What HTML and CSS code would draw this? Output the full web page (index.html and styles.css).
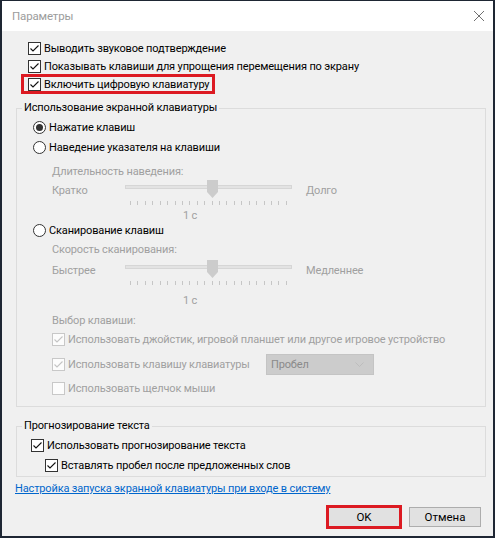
FILE: index.html
```html
<!DOCTYPE html>
<html lang="ru">
<head>
<meta charset="utf-8">
<title>Параметры</title>
<link rel="stylesheet" href="styles.css">
</head>
<body>
<div class="window">
  <div class="titlebar">
    <span class="title">Параметры</span>
    <svg class="close" width="12" height="12" viewBox="0 0 12 12"><path d="M1 1L11 11M11 1L1 11" stroke="#707070" stroke-width="1" fill="none"/></svg>
  </div>
  <div class="content">
    <div class="top-options">
      <div class="row"><span class="cb"><svg viewBox="0 0 13 13"><path d="M2.5 6.5L5 9L10.5 3.5" fill="none" stroke="#111" stroke-width="1.1"/></svg></span><span>Выводить звуковое подтверждение</span></div>
      <div class="row"><span class="cb"><svg viewBox="0 0 13 13"><path d="M2.5 6.5L5 9L10.5 3.5" fill="none" stroke="#111" stroke-width="1.1"/></svg></span><span>Показывать клавиши для упрощения перемещения по экрану</span></div>
      <div class="row"><span class="highlight"><span class="cb"><svg viewBox="0 0 13 13"><path d="M2.5 6.5L5 9L10.5 3.5" fill="none" stroke="#111" stroke-width="1.1"/></svg></span><span>Включить цифровую клавиатуру</span></span></div>
    </div>

    <fieldset class="group group-osk">
      <legend>Использование экранной клавиатуры</legend>
      <div class="group-body">
        <div class="radio-row r1"><span class="radio checked"></span><span>Нажатие клавиш</span></div>
        <div class="radio-row"><span class="radio"></span><span>Наведение указателя на клавиши</span></div>
        <div class="sub-label sl1">Длительность наведения:</div>
        <div class="slider-row">
          <span class="slider-label">Кратко</span>
          <div class="slider">
            <div class="track-area"><div class="track"></div><svg class="thumb" width="11" height="18" viewBox="0 0 11 18"><path d="M0 0H11V12L5.5 18L0 12Z" fill="#cccccc"/></svg></div>
            <div class="ticks"><i></i><i></i><i></i><i></i><i></i><i></i><i></i><i></i><i></i><i></i><i></i><i></i><i></i><i></i><i></i><i></i><i></i><i></i><i></i><i></i><i></i><i></i></div>
          </div>
          <span class="slider-end">Долго</span>
        </div>
        <div class="value v1">1 с</div>
        <div class="radio-row r3"><span class="radio"></span><span>Сканирование клавиш</span></div>
        <div class="sub-label sl2">Скорость сканирования:</div>
        <div class="slider-row s2">
          <span class="slider-label">Быстрее</span>
          <div class="slider">
            <div class="track-area"><div class="track"></div><svg class="thumb" width="11" height="18" viewBox="0 0 11 18"><path d="M0 0H11V12L5.5 18L0 12Z" fill="#cccccc"/></svg></div>
            <div class="ticks"><i></i><i></i><i></i><i></i><i></i><i></i><i></i><i></i><i></i><i></i><i></i><i></i><i></i><i></i><i></i><i></i><i></i><i></i><i></i><i></i><i></i><i></i></div>
          </div>
          <span class="slider-end">Медленнее</span>
        </div>
        <div class="value v2">1 с</div>
        <div class="sub-label sl3">Выбор клавиши:</div>
        <div class="row dis-row"><span class="cb disabled"><svg viewBox="0 0 13 13"><path d="M2.5 6.5L5 9L10.5 3.5" fill="none" stroke="#c4c4c4" stroke-width="1.1"/></svg></span><span>Использовать джойстик, игровой планшет или другое игровое устройство</span></div>
        <div class="row dis-row combo-row"><span class="cb disabled"><svg viewBox="0 0 13 13"><path d="M2.5 6.5L5 9L10.5 3.5" fill="none" stroke="#c4c4c4" stroke-width="1.1"/></svg></span><span class="combo-text">Использовать клавишу клавиатуры</span>
          <span class="combo"><span>Пробел</span><svg width="9" height="5" viewBox="0 0 9 5"><path d="M0.5 0.5L4.5 4.5L8.5 0.5" fill="none" stroke="#bdbdbd" stroke-width="1"/></svg></span>
        </div>
        <div class="row dis-row last"><span class="cb disabled"></span><span>Использовать щелчок мыши</span></div>
      </div>
    </fieldset>

    <fieldset class="group group-pred">
      <legend>Прогнозирование текста</legend>
      <div class="group-body pred-body">
        <div class="row"><span class="cb"><svg viewBox="0 0 13 13"><path d="M2.5 6.5L5 9L10.5 3.5" fill="none" stroke="#111" stroke-width="1.1"/></svg></span><span>Использовать прогнозирование текста</span></div>
        <div class="row indent"><span class="cb"><svg viewBox="0 0 13 13"><path d="M2.5 6.5L5 9L10.5 3.5" fill="none" stroke="#111" stroke-width="1.1"/></svg></span><span>Вставлять пробел после предложенных слов</span></div>
      </div>
    </fieldset>

    <div class="link-row"><a href="#" class="link">Настройка запуска экранной клавиатуры при входе в систему</a></div>

    <div class="buttons">
      <button class="btn btn-ok">OK</button>
      <button class="btn">Отмена</button>
    </div>
  </div>
</div>
</body>
</html>
```

FILE: styles.css
```css
* { box-sizing: border-box; }
html, body { margin: 0; padding: 0; }
body {
  font-family: Roboto, "Noto Sans", sans-serif;
  font-size: 11px;
  letter-spacing: -0.15px;
  color: #000;
  background: #1b2230;
}
.window {
  width: 495px;
  height: 538px;
  border-style: solid;
  border-color: #1e2633;
  border-width: 1px 2px 2px 2px;
  background: #f0f0f0;
  display: flex;
  flex-direction: column;
}
.titlebar {
  height: 30px;
  flex: none;
  background: #fff;
  display: flex;
  align-items: center;
  justify-content: space-between;
  padding: 0 8px 0 10px;
}
.title { color: #9c9c9c; font-size: 11.5px; }
.close { display: block; }

.content { flex: 1; display: flex; flex-direction: column; }

.top-options { padding: 8px 0 0 26px; display: flex; flex-direction: column; }
.row { height: 18px; display: flex; align-items: center; white-space: nowrap; }

.cb {
  width: 13px; height: 13px; flex: none;
  border: 1px solid #333;
  background: #fff;
  margin-right: 3px;
  display: flex; align-items: center; justify-content: center;
}
.cb svg { width: 13px; height: 13px; display: block; flex: none; }
.cb.disabled { border-color: #c8c8c8; background: #fcfcfc; }

.highlight {
  display: inline-flex; align-items: center;
  height: 14px;
  margin-left: -4px;
  padding: 0 3px 0 4px;
  outline: 3px solid #dc1a22;
}

.group {
  margin: 7px 7px 0 14px;
  padding: 0 0 9px 5px;
  border: 1px solid #dcdcdc;
  min-width: 0;
}
.group legend { padding: 0 2px; line-height: 16px; }
.group-body { display: flex; flex-direction: column; padding-left: 11px; }

.radio-row { height: 20px; display: flex; align-items: center; }
.radio-row.r1 { margin-top: 1px; }
.radio-row.r3 { height: 14px; }
.radio {
  width: 13px; height: 13px; flex: none;
  border: 1px solid #333; border-radius: 50%;
  background: #fff;
  margin-right: 3px;
  display: flex; align-items: center; justify-content: center;
}
.radio.checked::after {
  content: ""; width: 7px; height: 7px; border-radius: 50%; background: #333;
}

.sub-label { height: 18px; line-height: 18px; padding-left: 19px; color: #a0a0a0; }
.sl1 { margin-top: 6px; }
.sl2 { margin-top: 4px; }
.sl3 { margin-top: 2px; }

.slider-row { height: 24px; display: flex; align-items: flex-start; padding-left: 19px; color: #a0a0a0; }
.slider-row.s2 { margin-top: 2px; }
.slider-label { width: 73px; line-height: 18px; margin-top: 1px; }
.slider-end { line-height: 18px; margin-top: 1px; margin-left: 14px; }
.slider { width: 167px; display: flex; flex-direction: column; }
.track-area { height: 12px; position: relative; display: flex; align-items: center; }
.track { width: 100%; height: 4px; background: #e3e3e3; border: 1px solid #d6d6d6; }
.thumb { position: absolute; left: 82px; top: -1px; display: block; }
.ticks { margin-top: 8px; height: 4px; display: flex; justify-content: space-between; padding: 0 5px; }
.ticks i { width: 1px; height: 4px; background: #c6c6c6; display: block; }

.value { padding-left: 150px; color: #a0a0a0; }
.v1 { margin-top: 4px; height: 14px; line-height: 14px; }
.v2 { margin-top: 7px; height: 18px; line-height: 18px; }

.dis-row { padding-left: 19px; color: #a0a0a0; }
.combo-row { height: 22px; margin-top: 5px; }
.combo-text { width: 198px; }
.combo {
  width: 108px; height: 21px;
  background: #cccccc;
  border: 1px solid #c4c4c4;
  display: flex; align-items: center; justify-content: space-between;
  padding: 0 9px 0 4px;
  color: #8a8a8a;
}
.dis-row.last { margin-top: 4px; }

.group-pred { margin-top: 11px; padding-bottom: 2px; }
.pred-body { padding-left: 9px; }
.pred-body .row { margin-top: 2px; }
.pred-body .indent { padding-left: 14px; }

.link-row { margin-top: 3px; height: 18px; line-height: 18px; padding-left: 13px; }
.link { color: #0066cc; text-decoration: underline; }

.buttons { margin-top: 9px; display: flex; justify-content: flex-end; gap: 9px; padding-right: 12px; }
.btn {
  width: 72px; height: 20px;
  font: inherit;
  font-size: 11.5px;
  background: #e1e1e1;
  border: 1px solid #adadad;
  color: #000;
  padding: 0;
}
.btn-ok { outline: 3px solid #dc1a22; outline-offset: -1px; }
```
